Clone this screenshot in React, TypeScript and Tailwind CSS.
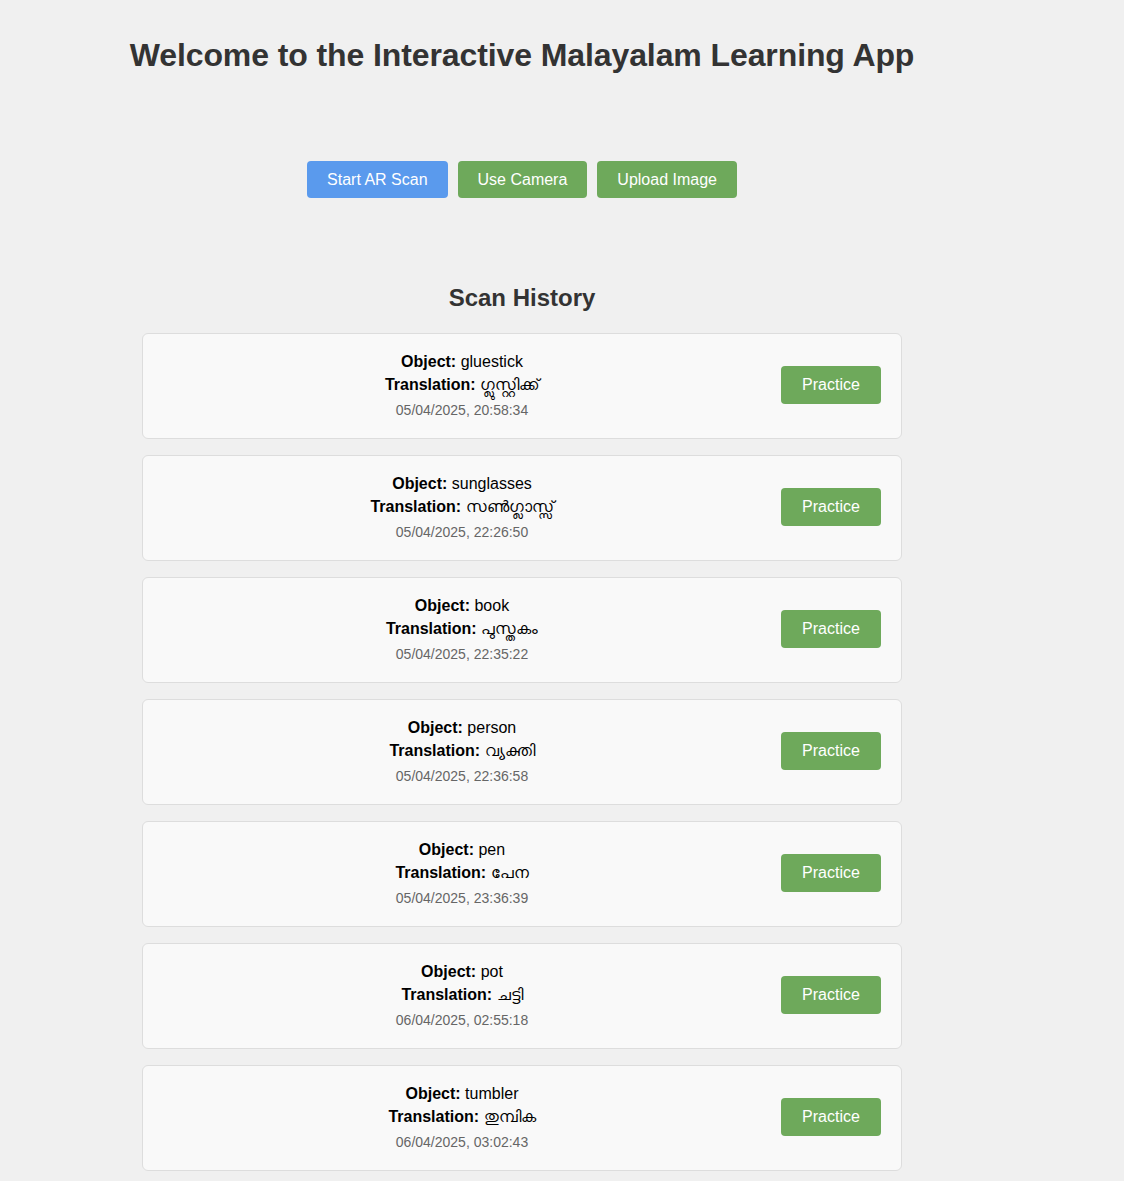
import React from "react";

const items = [
  { obj: "gluestick", tr: "ഗ്ലുസ്റ്റിക്ക്", date: "05/04/2025, 20:58:34" },
  { obj: "sunglasses", tr: "സൺഗ്ലാസ്സ്", date: "05/04/2025, 22:26:50" },
  { obj: "book", tr: "പുസ്തകം", date: "05/04/2025, 22:35:22" },
  { obj: "person", tr: "വ്യക്തി", date: "05/04/2025, 22:36:58" },
  { obj: "pen", tr: "പേന", date: "05/04/2025, 23:36:39" },
  { obj: "pot", tr: "ചട്ടി", date: "06/04/2025, 02:55:18" },
  { obj: "tumbler", tr: "തുമ്പിക", date: "06/04/2025, 03:02:43" },
];

export default function App() {
  return (
    <div
      className="min-h-screen bg-[#f0f0f0] text-[#333]"
      style={{ fontFamily: '"Liberation Sans", Arial, "Noto Sans", sans-serif' }}
    >
      <div className="ml-[122px] w-[800px]">
        <h1 className="whitespace-nowrap pt-[37px] text-center text-[32px] font-bold leading-[37px] tracking-[-0.1px] text-[#333]">
          Welcome to the Interactive Malayalam Learning App
        </h1>
        <div className="px-5">
          <div className="mt-[87px] flex justify-center gap-[10px]">
            <button className="h-[37px] rounded-[4px] bg-[#5a9aed] px-5 text-[16px] text-white">
              Start AR Scan
            </button>
            <button className="h-[37px] rounded-[4px] bg-[#6ea95b] px-5 text-[16px] text-white">
              Use Camera
            </button>
            <button className="h-[37px] rounded-[4px] bg-[#6ea95b] px-5 text-[16px] text-white">
              Upload Image
            </button>
          </div>
          <h2 className="mt-[86px] text-center text-[24px] font-bold leading-[28px] text-[#333]">
            Scan History
          </h2>
          <div className="mt-[21px] flex flex-col gap-[16px]">
            {items.map((it) => (
              <div
                key={it.obj}
                className="flex items-center gap-5 rounded-[6px] border border-[#dddddd] bg-[#f9f9f9] px-5 pb-[18px] pt-[16px]"
              >
                <div className="flex-1 text-center">
                  <div className="text-[16px] leading-[23px] text-black">
                    <span className="font-bold">Object:</span> {it.obj}
                  </div>
                  <div className="text-[16px] leading-[23px] text-black">
                    <span className="font-bold">Translation:</span> {it.tr}
                  </div>
                  <div className="mt-[4px] text-[14px] leading-[20px] text-[#666]">{it.date}</div>
                </div>
                <button className="h-[38px] w-[100px] rounded-[4px] bg-[#6ea95b] text-[16px] text-white">
                  Practice
                </button>
              </div>
            ))}
          </div>
        </div>
      </div>
    </div>
  );
}
